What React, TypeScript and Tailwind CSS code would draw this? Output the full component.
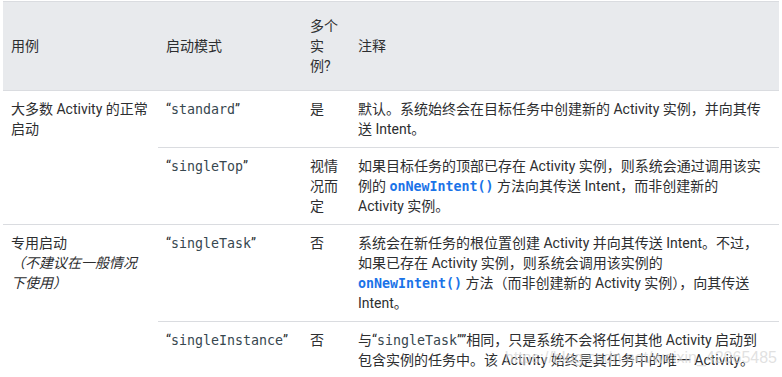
const code = "font-['DejaVu_Sans_Mono','Liberation_Mono',monospace] text-[13.3px] leading-none text-[#37474f]";
const link = "font-['DejaVu_Sans_Mono','Liberation_Mono',monospace] text-[13.3px] leading-none font-semibold text-[#1a73e8]";

const App = () => {
  const th = "px-2 py-3.5 text-left font-normal align-middle";
  const td = "px-2 py-2 align-top border-b border-[#dadce0]";

  return (
    <div className="relative w-[782px] h-[377px] bg-white font-['Roboto','Noto_Sans_CJK_SC',sans-serif] text-[14px] leading-5 text-[#2d2e30] overflow-hidden">
      <table className="ml-[3px] mt-px w-[776px] table-fixed border-collapse">
        <colgroup>
          <col className="w-[155px]" />
          <col className="w-[144px]" />
          <col className="w-[48px]" />
          <col />
        </colgroup>
        <thead>
          <tr className="bg-[#e8eaed] border-t border-b border-[#dadce0]">
            <th className={th}>用例</th>
            <th className={th}>启动模式</th>
            <th className={th}>
              多个
              <br />
              实
              <br />
              例?
            </th>
            <th className={th}>注释</th>
          </tr>
        </thead>
        <tbody>
          <tr>
            <td className={td} rowSpan={2}>
              大多数 Activity 的正常
              <br />
              启动
            </td>
            <td className={td}>
              “<code className={code}>standard</code>”
            </td>
            <td className={td}>是</td>
            <td className={td}>
              默认。系统始终会在目标任务中创建新的 Activity 实例，并向其传
              <br />
              送 Intent。
            </td>
          </tr>
          <tr>
            <td className={td}>
              “<code className={code}>singleTop</code>”
            </td>
            <td className={td}>
              视情
              <br />
              况而
              <br />定
            </td>
            <td className={td}>
              如果目标任务的顶部已存在 Activity 实例，则系统会通过调用该实
              <br />
              例的 <code className={link}>onNewIntent()</code> 方法向其传送 Intent，而非创建新的
              <br />
              Activity 实例。
            </td>
          </tr>
          <tr>
            <td className={td} rowSpan={2}>
              专用启动
              <br />
              <em>（不建议在一般情况</em>
              <br />
              <em>下使用）</em>
            </td>
            <td className={td}>
              “<code className={code}>singleTask</code>”
            </td>
            <td className={td}>否</td>
            <td className={td}>
              系统会在新任务的根位置创建 Activity 并向其传送 Intent。不过，
              <br />
              如果已存在 Activity 实例，则系统会调用该实例的
              <br />
              <code className={link}>onNewIntent()</code> 方法（而非创建新的 Activity 实例），向其传送
              <br />
              Intent。
            </td>
          </tr>
          <tr>
            <td className={td}>
              “<code className={code}>singleInstance</code>”
            </td>
            <td className={td}>否</td>
            <td className={td}>
              与“<code className={code}>singleTask</code>””相同，只是系统不会将任何其他 Activity 启动到
              <br />
              包含实例的任务中。该 Activity 始终是其任务中的唯一 Activity。
            </td>
          </tr>
        </tbody>
      </table>

      <div className="pointer-events-none absolute right-[5px] top-[348px] font-['Liberation_Sans',sans-serif] text-[16px] text-[#d4d4d4]/70">
        https://blog.csdn.net/weixin_42065485
      </div>
    </div>
  );
};

export default App;
